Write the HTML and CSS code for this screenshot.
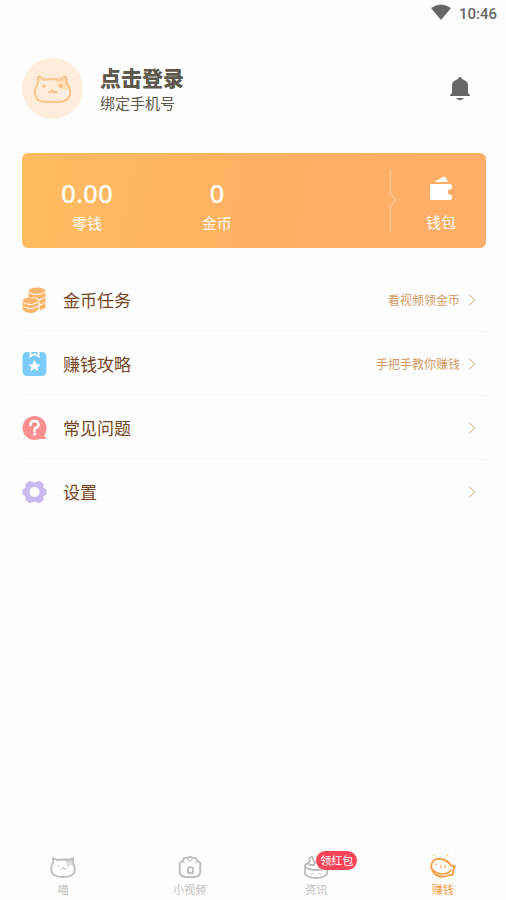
FILE: index.html
```html
<!DOCTYPE html>
<html lang="zh-CN">
<head>
<meta charset="utf-8">
<meta name="viewport" content="width=device-width, initial-scale=1">
<title>赚钱</title>
<link rel="stylesheet" href="styles.css">
</head>
<body>
<div class="app">
  <div class="status">
    <svg width="20" height="16" viewBox="0 0 20 16" aria-hidden="true"><path d="M0 4Q10-3 20 4L10 16Z" fill="#666"/></svg>
    <span>10:46</span>
  </div>

  <header class="profile">
    <svg class="avatar" viewBox="0 0 61 61" aria-hidden="true">
      <circle cx="30.500" cy="30.500" r="30.500" fill="#ffeddb"/>
      <path d="M34 22Q41 22 45 19L48 30Q45 33 40 31Q34 29 34 22Z" fill="#ffdcb9"/>
      <path d="M16 20Q16 18 18 19L22 22Q30 20 38 22L42 19Q44 18 44 20L45 26Q49 31 48 37Q45 44 37 44H24Q15 44 13 37Q12 31 16 26Z" fill="none" stroke="#fcc28b" stroke-width="2" stroke-linejoin="round"/>
      <path d="M27 34Q30 35 30 32Q31 35 35 34" fill="none" stroke="#fcb577" stroke-width="1.500" stroke-linecap="round"/>
      <ellipse cx="22" cy="28" rx="1.500" ry="2" fill="#fcc28b"/>
      <ellipse cx="39" cy="28" rx="1.500" ry="2" fill="#fcb577"/>
    </svg>
    <div class="identity">
      <h1>点击登录</h1>
      <p>绑定手机号</p>
    </div>
    <button class="bell" type="button" aria-label="通知">
      <svg width="22" height="24" viewBox="0 0 22 24"><path d="M9 2Q9 0 11 0T13 2Q19 4 19 8V16L21 18V19H1V18L3 16V8Q3 4 9 2Z" fill="#666"/><path d="M7 21H15Q14 23 11 23T7 21Z" fill="#666"/></svg>
    </button>
  </header>

  <section class="card">
    <div class="stat"><strong>0.00</strong><span>零钱</span></div>
    <div class="stat"><strong>0</strong><span>金币</span></div>
    <svg class="split" width="8" height="64" viewBox="0 0 8 64" aria-hidden="true"><path d="M2.500 0V25L7.500 31L2.500 38V64" fill="none" stroke="#ffd2a5"/></svg>
    <a class="wallet" href="#wallet">
      <svg width="24" height="25" viewBox="0 0 24 25" aria-hidden="true"><path d="M5 6L14 1Q16 0 17 2L19 6Z" fill="#fff"/><path d="M2 8H21Q23 8 23 10V13H22Q19 13 19 16T22 19H23V22Q23 24 21 24H3Q1 24 1 22V9Q1 8 2 8Z" fill="#fff"/></svg>
      <span>钱包</span>
    </a>
  </section>

  <nav class="menu">
    <a href="#tasks">
      <svg class="icon" viewBox="0 0 24 26" aria-hidden="true">
        <path d="M6 4V22Q14 26 23 21V4Z" fill="#ffb46b"/><ellipse cx="14.500" cy="4" rx="8.500" ry="3.500" fill="#ffb46b"/>
        <path d="M6 5Q14 10 23 5M14 13Q19 13 23 10M16 18Q20 18 23 15" fill="none" stroke="#fff"/>
        <path d="M-1 14Q-1 10 8 10T17 14V26H-1Z" fill="#fff"/>
        <path d="M0 14V22Q2 26 8 26T16 22V14Z" fill="#ffb46b"/><ellipse cx="8" cy="14" rx="8" ry="3.500" fill="#ffb46b"/>
        <path d="M0 15Q8 20 16 15M0 19Q8 24 16 19" fill="none" stroke="#fff"/>
      </svg>
      <span class="label">金币任务</span><span class="hint">看视频领金币</span>
      <svg class="chevron" viewBox="0 0 8 12" aria-hidden="true"><path d="M1 1L7 6L1 11"/></svg>
    </a>
    <a href="#guide">
      <svg class="icon" viewBox="0 0 24 26" aria-hidden="true"><path d="M5 1H7V7L12 4L17 7V1H19Q24 1 24 6V20Q24 25 19 25H5Q0 25 0 20V6Q0 1 5 1Z" fill="#7bcbfb"/><path d="M9 1H15V4L12 2L9 4Z" fill="#7bcbfb"/><path d="M12 9L14 13L18 14L15 16L16 20L12 18L8 20L9 16L6 14L10 13Z" fill="#fff"/></svg>
      <span class="label">赚钱攻略</span><span class="hint">手把手教你赚钱</span>
      <svg class="chevron" viewBox="0 0 8 12" aria-hidden="true"><path d="M1 1L7 6L1 11"/></svg>
    </a>
    <a href="#faq">
      <svg class="icon" viewBox="0 0 24 26" aria-hidden="true"><circle cx="12" cy="13" r="12" fill="#fc8f90"/><path d="M22 17V21L24 24H16Z" fill="#fc8f90"/><path d="M8 10Q8 6 12 6T16 10Q16 12 13 13Q12 14 12 16" fill="none" stroke="#fff" stroke-width="2.500" stroke-linecap="round"/><circle cx="12" cy="19" r="1.500" fill="#fff"/></svg>
      <span class="label">常见问题</span>
      <svg class="chevron" viewBox="0 0 8 12" aria-hidden="true"><path d="M1 1L7 6L1 11"/></svg>
    </a>
    <a href="#settings">
      <svg class="icon" viewBox="0 0 24 26" aria-hidden="true"><path d="M7 3L10 4Q12 5 14 4L17 3L20 5V8Q20 10 23 11V15Q20 16 20 18V21L17 23L14 22Q12 21 10 22L7 23L4 21V18Q4 16 1 15V11Q4 10 4 8V5Z" fill="#c9baf0" stroke="#c9baf0" stroke-width="2" stroke-linejoin="round"/><circle cx="12" cy="13" r="5" fill="#fff"/></svg>
      <span class="label">设置</span>
      <svg class="chevron" viewBox="0 0 8 12" aria-hidden="true"><path d="M1 1L7 6L1 11"/></svg>
    </a>
  </nav>

  <nav class="tabs">
    <a href="#meow">
      <svg viewBox="0 0 28 28" aria-hidden="true"><path d="M16 6Q20 6 23 5L24 12Q17 14 16 6Z" fill="#ddd" stroke="none"/><path d="M4 5L8 7Q14 6 20 7L24 5L24 10Q27 15 25 20Q22 24 14 24T3 20Q1 15 4 10Z" stroke-width="1.800"/><path d="M12 16Q14 17 14 14Q15 17 17 16M9 12V13M19 12V13"/></svg>
      <span>喵</span>
    </a>
    <a href="#videos">
      <svg viewBox="0 0 28 28" aria-hidden="true"><path d="M4 14Q2 9 7 8Q7 4 11 5Q14 3 17 5Q21 4 21 8Q26 9 24 14Q26 24 18 24H10Q2 24 4 14Z" stroke-width="1.800"/><path d="M7 8Q7 10 9 10M21 8Q21 10 19 10M11 5Q12 8 14 8Q16 8 17 5"/><path d="M12 15L14 14L17 15V20H12Z" stroke-width="1.800"/></svg>
      <span>小视频</span>
    </a>
    <a href="#news">
      <svg viewBox="0 0 28 28" aria-hidden="true"><ellipse cx="14" cy="13" rx="11" ry="4" stroke-width="1.800"/><path d="M3 13V21Q6 25 14 25T25 21V13" stroke-width="1.800"/><path d="M8 12Q5 9 8 8Q6 5 9 4Q12 4 11 7Q14 8 12 12Z" stroke-width="1.800" fill="#fefefe"/><path d="M9 21Q11 22 12 20M16 20Q17 22 19 21"/></svg>
      <span>资讯</span>
      <em class="badge">领红包</em>
    </a>
    <a class="active" href="#earn" aria-current="page">
      <svg viewBox="0 0 28 28" aria-hidden="true"><path d="M3 10Q5 5 11 6Q17 6 22 12Q24 14 26 13Q24 17 24 19Q25 22 21 22Q11 26 5 20Q1 16 3 10Z" stroke-width="1.800"/><path d="M3 16Q8 21 14 21Q19 21 22 17" stroke-width="1.500"/><path d="M12 12Q13 13 12 15M16 12Q17 13 16 15M7 11V12M5 2L6 3M19 2L18 3"/></svg>
      <span>赚钱</span>
    </a>
  </nav>
</div>
</body>
</html>
```

FILE: styles.css
```css
* { box-sizing: border-box; }

body {
  margin: 0;
  background: #fefefe;
  font-family: "Noto Sans CJK SC", sans-serif;
}

h1, p { margin: 0; }
a { color: inherit; text-decoration: none; }
svg { display: block; flex: none; }

.app {
  display: flex;
  flex-direction: column;
  min-height: 100vh;
}

.status {
  display: flex;
  align-items: center;
  justify-content: flex-end;
  gap: 8px;
  height: 28px;
  padding-right: 9px;
  color: #666;
  font: 500 15px/28px Roboto, sans-serif;
}

.status svg { margin-bottom: 4px; }

.profile {
  display: flex;
  align-items: center;
  gap: 17px;
  padding: 30px 31px 34px 22px;
}

.avatar { width: 61px; height: 61px; }
.identity { flex: 1; color: #5c584c; }

.identity h1 {
  font-size: 21px;
  font-weight: 900;
  line-height: 28px;
}

.identity p {
  font-size: 15px;
  line-height: 24px;
}

.bell {
  padding: 4px;
  border: 0;
  background: none;
}

.card {
  display: flex;
  align-items: center;
  height: 95px;
  margin: 0 20px 0 22px;
  border-radius: 6px;
  background: linear-gradient(100deg, #ffbc60, #ffb163 50%, #ffad68);
  color: #fff;
  text-align: center;
  font-size: 15px;
  line-height: 24px;
}

.stat {
  width: 28%;
  padding-top: 8px;
}

.stat strong {
  display: block;
  font: 500 26px/36px "Noto Sans", sans-serif;
}

.stat span { display: block; }
.split { margin-left: auto; }

.wallet {
  display: flex;
  flex-direction: column;
  align-items: center;
  gap: 9px;
  width: 90px;
  padding-top: 8px;
}

.menu { padding: 20px 20px 0 22px; }

.menu a {
  display: flex;
  align-items: center;
  height: 64px;
  padding-right: 10px;
  border-bottom: 1px solid #f5f5f5;
  color: #75461f;
}

.menu a:last-child { border-bottom: 0; }
.icon { width: 25px; height: 26px; }

.label {
  flex: 1;
  margin-left: 16px;
  font-size: 17px;
  line-height: 26px;
}

.hint {
  margin-right: 8px;
  color: #d29b65;
  font-size: 12px;
  line-height: 20px;
}

.chevron {
  width: 8px;
  height: 12px;
  fill: none;
  stroke: #d9ab7e;
}

.tabs {
  display: grid;
  grid-template-columns: repeat(4, 1fr);
  margin-top: auto;
  padding-bottom: 3px;
}

.tabs a {
  position: relative;
  display: flex;
  flex-direction: column;
  align-items: center;
  color: #bdbdbd;
  font-size: 11px;
  line-height: 16px;
}

.tabs svg {
  width: 28px;
  height: 28px;
  fill: none;
  stroke: currentColor;
  stroke-linecap: round;
  stroke-linejoin: round;
}

.tabs .active { color: #fb9a41; }

.badge {
  position: absolute;
  top: -2px;
  left: 50%;
  padding: 0 4px;
  border-radius: 10px;
  background: #fb4359;
  color: #fff;
  font-size: 11px;
  font-style: normal;
  line-height: 19px;
}
```
